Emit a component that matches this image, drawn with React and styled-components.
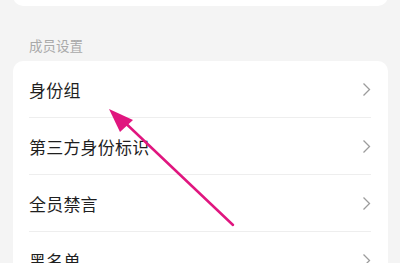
import styled, { createGlobalStyle } from 'styled-components';

const GlobalStyle = createGlobalStyle`
    html, body {
        margin: 0;
        padding: 0;
        background: #f4f4f4;
    }
    body {
        font-family: "Noto Sans CJK SC", "Noto Sans", sans-serif;
    }
`;

const Page = styled.div`
    position: relative;
    width: 400px;
    height: 263px;
    overflow: hidden;
    background: #f4f4f4;
    padding: 0 12px 0 13px;
    box-sizing: border-box;
`;

const TopCard = styled.div`
    height: 6px;
    margin-top: -10px;
    padding-top: 10px;
    background: #fff;
    border-radius: 0 0 10px 10px;
`;

const SectionTitle = styled.div`
    padding: 29px 0 0 16px;
    height: 26px;
    font-size: 13.5px;
    line-height: 20px;
    color: #a9a9a9;
`;

const Card = styled.div`
    background: #fff;
    border-radius: 10px;
    padding: 0 17px 0 16px;
`;

const Row = styled.div`
    display: flex;
    align-items: center;
    justify-content: space-between;
    height: 57px;
    border-bottom: ${(props) => (props.last ? 'none' : '1px solid #eeeeee')};
    box-sizing: border-box;
`;

const Label = styled.span`
    font-size: 17px;
    color: #1f1f1f;
    letter-spacing: 0.2px;
`;

const Arrow = styled.svg`
    position: absolute;
    left: 0;
    top: 0;
    pointer-events: none;
`;

const items = ['身份组', '第三方身份标识', '全员禁言', '黑名单'];

function Chevron() {
    return (
        <svg width="9" height="15" viewBox="0 0 9 15">
            <path d="M1.5 1.5 L7.5 7.5 L1.5 13.5" fill="none" stroke="#9c9c9c" strokeWidth="1.3" />
        </svg>
    );
}

export default function App() {
    return (
        <>
            <GlobalStyle />
            <Page>
                <TopCard />
                <SectionTitle>成员设置</SectionTitle>
                <Card>
                    {items.map((item, i) => (
                        <Row key={item} last={i === items.length - 1}>
                            <Label>{item}</Label>
                            <Chevron />
                        </Row>
                    ))}
                </Card>
                <Arrow width="400" height="263" viewBox="0 0 400 263">
                    <line x1="233" y1="225" x2="118" y2="116" stroke="#e0167f" strokeWidth="2.5" strokeLinecap="round" />
                    <polygon points="109,109 133,120 120,132" fill="#e0167f" />
                </Arrow>
            </Page>
        </>
    );
}
